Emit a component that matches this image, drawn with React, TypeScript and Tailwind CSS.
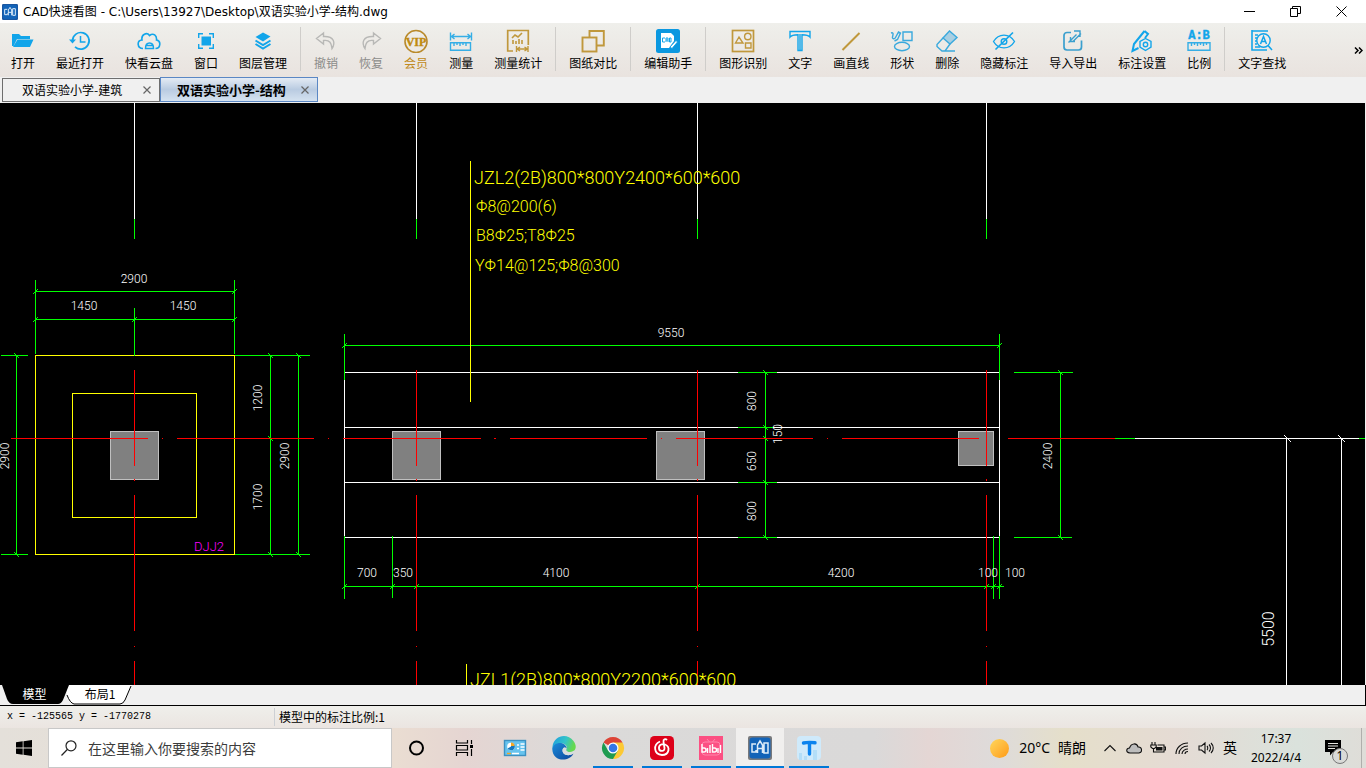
import type { ReactNode } from "react";

type IconProps = { children: ReactNode; color?: string; size?: string };

const BLUE = "#12a5ea";
const GOLD = "#c0983c";

const Icon = ({ children, color = BLUE, size = "w-6 h-6" }: IconProps) => (
  <svg viewBox="0 0 24 24" className={`${size} shrink-0`} fill="none" stroke={color} strokeWidth="1.4" aria-hidden="true">
    {children}
  </svg>
);

const CadLogo = ({ size, frame = false }: { size: string; frame?: boolean }) => (
  <svg viewBox="0 0 24 24" className={`${size} shrink-0`} aria-hidden="true">
    <rect width="24" height="24" rx="2" fill={frame ? "#77797c" : "#1a56a0"} />
    <rect x="1.5" y="1.5" width="21" height="21" rx="3" fill="#1263b8" />
    <g fill="none" stroke="#dcebf8" strokeWidth="1.5">
      <path d="M8 8H4v8h4V14M16 7v10h4V7zM9.500 17V9l2.500-4 2.500 4v8M9.500 12.500h5" />
    </g>
  </svg>
);

type Tool = { label: string; icon: ReactNode; tone?: "gray" | "gold"; sepAfter?: boolean };

const tools: Tool[] = [
  {
    label: "打开",
    icon: (
      <Icon>
        <path d="M1 17V5h7l2 2h9v3H6L2.500 17z M6.500 10.500h16L19 18H2z" fill={BLUE} stroke="none" />
      </Icon>
    ),
  },
  {
    label: "最近打开",
    icon: (
      <Icon>
        <path d="M4.500 11.500a8.300 8.300 0 1 1 2.500 6.300" strokeWidth="1.700" />
        <path d="M1 10.500h7l-3.500 4z" fill={BLUE} stroke="none" />
        <path d="M12.500 7v6h5" strokeWidth="1.500" />
      </Icon>
    ),
  },
  {
    label: "快看云盘",
    icon: (
      <Icon>
        <path d="M6 19.500c-6 0-6.500-8-1-8.500C4 5 10 3 12.500 6.500c4-3 7.500 0 7 4.500 5 1 4 8.500-1 8.500" strokeWidth="1.600" />
        <path d="M8.500 19.500c0-7.500 8-7.500 8 0zM8.500 16.500h8" strokeWidth="1.500" />
      </Icon>
    ),
  },
  {
    label: "窗口",
    icon: (
      <Icon>
        <rect x="7.500" y="7.500" width="9.500" height="9" fill={BLUE} stroke="none" />
        <path d="M9 4.700H4.700V9M15 4.700h4.300V9M9 19.300H4.700V15M15 19.300h4.300V15" />
      </Icon>
    ),
  },
  {
    label: "图层管理",
    sepAfter: true,
    icon: (
      <Icon>
        <path d="M12 3.500 19.500 7.500 12 12.500 4.500 8z" fill={BLUE} stroke="none" />
        <path d="M4.500 11.500 12 16l7.500-4.500M4.500 15 12 19.500l7.500-4.500" strokeWidth="2" />
      </Icon>
    ),
  },
  {
    label: "撤销",
    tone: "gray",
    icon: (
      <Icon color="#b8b8b6">
        <path d="M9.500 4 2.500 9.500l7 5.500v-3.500c6.500-1 8 3 8.500 8 3.500-5.500 2.500-12.500-8.500-12z" />
      </Icon>
    ),
  },
  {
    label: "恢复",
    tone: "gray",
    icon: (
      <Icon color="#b8b8b6">
        <path d="m14.500 4 7 5.500-7 5.500v-3.500c-6.500-1-8 3-8.500 8-3.500-5.500-2.500-12.500 8.500-12z" />
      </Icon>
    ),
  },
  {
    label: "会员",
    tone: "gold",
    icon: (
      <Icon color="#b98a2c">
        <circle cx="12" cy="12.500" r="11" strokeWidth="1.600" />
        <text x="12" y="17" textAnchor="middle" fontSize="12" fontWeight="700" fill="#c08a10" stroke="#c08a10" strokeWidth=".4" fontFamily="Liberation Serif, serif">
          VIP
        </text>
      </Icon>
    ),
  },
  {
    label: "测量",
    icon: (
      <Icon color="#35aee6">
        <path d="M1.500 3.500v8M22.500 3.500v8M2 7.500h20M5.500 5 2.500 7.500l3 2.500M18.500 5l3 2.500-3 2.500M1.500 13.700h20v7.600h-20zM5 14v3M8 14v2M11 14v3M14 14v2M17 14v3" />
      </Icon>
    ),
  },
  {
    label: "测量统计",
    sepAfter: true,
    icon: (
      <Icon color={GOLD}>
        <path d="M7 22H1.700V1.500h20.600V16" strokeWidth="1.700" />
        <path d="m6 9 3-3 3 2 4-4M7 15v-4M10 15v-3M13 15v-5M16 15v-4" strokeWidth="1.600" />
        <path d="M10.500 17v6M22 17v6M11 20h11M14 18l-3 2 3 2M18.500 18l3 2-3 2" />
      </Icon>
    ),
  },
  {
    label: "图纸对比",
    sepAfter: true,
    icon: (
      <Icon color={GOLD}>
        <path d="M8.500 8.500V2h14.300v14.500h-7" strokeWidth="1.900" />
        <rect x="1.500" y="8.500" width="14" height="14" strokeWidth="1.900" />
      </Icon>
    ),
  },
  {
    label: "编辑助手",
    sepAfter: true,
    icon: (
      <Icon>
        <rect width="24" height="24" rx="2.500" fill="#0b98e0" stroke="none" />
        <path d="M5 4h10l3 3v5l-5 7H5z" fill="#fff" stroke="none" />
        <path d="M9 9H6.500v4H9M10 13V9h2v4M10 11h2M13.500 9v4h1.500V9z" strokeWidth="1" />
        <path d="m14 18 6-6.500 1.500 1.500-5.500 6.500z" fill="#fff" stroke="#0b98e0" strokeWidth=".8" />
      </Icon>
    ),
  },
  {
    label: "图形识别",
    icon: (
      <Icon color={GOLD}>
        <rect x="1.500" y="1.500" width="21" height="21" strokeWidth="1.700" />
        <path d="M8 8 4.500 14h7.500zM14.500 14h5.500v5h-5.500z" />
        <circle cx="16.800" cy="7.500" r="3.200" />
      </Icon>
    ),
  },
  {
    label: "文字",
    icon: (
      <Icon>
        <path d="M2 2.500h20v5.500c-1.500-2-4-2.300-8-2.300v15.800h-4V5.700C6 5.700 3.500 6 2 8z" />
        <path d="M12 5v16" />
      </Icon>
    ),
  },
  {
    label: "画直线",
    icon: (
      <Icon color={GOLD}>
        <path d="M3.500 21 20.500 4" strokeWidth="1.900" />
      </Icon>
    ),
  },
  {
    label: "形状",
    icon: (
      <Icon color="#3aa9dd">
        <path d="M13 3h9v8.500h-9z" />
        <ellipse cx="12" cy="17.500" rx="7.500" ry="4.200" />
        <path d="M1 4c3-1 2 2 1.500 4s2 2.500 3 .5L8.500 3l2 1-3 6.500-3 1.500" />
      </Icon>
    ),
  },
  {
    label: "删除",
    icon: (
      <Icon color="#3aa9dd">
        <path d="M14.500 2 8 9l7 6 7-6.500z" fill="#a9cfe2" />
        <path d="m8 9-6 6.500v2l5 4.500h3l5-7M8 22h12" />
      </Icon>
    ),
  },
  {
    label: "隐藏标注",
    icon: (
      <Icon>
        <path d="M1.500 12.500c5-8.500 16-8.500 21 0-5 8.500-16 8.500-21 0z" />
        <circle cx="12" cy="12.500" r="2.800" />
        <path d="M21 3.500 3.500 20.500" strokeWidth="1.700" />
      </Icon>
    ),
  },
  {
    label: "导入导出",
    icon: (
      <Icon color="#3a9fce">
        <path d="M10 3.500H6a3 3 0 0 0-3 3V18a3 3 0 0 0 3 3h11.500a3 3 0 0 0 3-3v-6.500" strokeWidth="1.700" />
        <path d="m7.500 13.500 8-8M13 2h6v6M20 4.500l-8 8M14 12.500h-4.500V8" />
      </Icon>
    ),
  },
  {
    label: "标注设置",
    icon: (
      <Icon>
        <path d="M14.500 2 4 15 2.500 22l6-3M14.500 2l3.500 3-3 4" strokeWidth="2" />
        <path d="m15.500 9.500 5.500 3V18l-5.500 3.500L10 18v-5.500z" />
        <circle cx="15.500" cy="15.500" r="2.200" />
      </Icon>
    ),
  },
  {
    label: "比例",
    sepAfter: true,
    icon: (
      <Icon color="#35aee6">
        <text x="12" y="10" textAnchor="middle" fontSize="12" fontWeight="700" fill={BLUE} stroke={BLUE} strokeWidth=".4" fontFamily="Liberation Mono, monospace">
          A:B
        </text>
        <path d="M1 13.700h22v7.600H1zM4.500 14v3M7.500 14v2M10.500 14v3M13.500 14v2M16.500 14v3M19.500 14v2" />
      </Icon>
    ),
  },
  {
    label: "文字查找",
    icon: (
      <Icon>
        <path d="M2 1v20h15M2 2h16M5 6h3M5 9h2M5 12h2M5 15h2M5 18h5" strokeWidth="1.600" />
        <circle cx="13.500" cy="11.500" r="6.700" fill="#efeeeb" />
        <path d="M10.500 15 13.500 7.500 16.500 15M11.500 12.500h4M18 16.500l4 4.500" strokeWidth="1.500" />
      </Icon>
    ),
  },
];

const TitleBar = () => (
  <header className="flex h-[23px] items-center bg-white pl-0.5 text-black">
    <CadLogo size="w-4 h-4" />
    <h1 className="ml-[5px] flex-1 whitespace-nowrap font-['DejaVu_Sans','Noto_Sans_CJK_SC',sans-serif] text-xs leading-4">CAD快速看图 - C:\Users\13927\Desktop\双语实验小学-结构.dwg</h1>
    <div className="flex h-full pr-0.5">
      <button aria-label="最小化" className="flex w-[46px] items-center justify-center">
        <svg viewBox="0 0 11 11" className="h-[11px] w-[11px]" stroke="#000" fill="none">
          <path d="M0 5.500h11" />
        </svg>
      </button>
      <button aria-label="还原" className="flex w-[46px] items-center justify-center">
        <svg viewBox="0 0 11 11" className="h-[11px] w-[11px]" stroke="#000" fill="none">
          <path d="M.5 2.500h7v8h-7zM2.500 2.500v-2h8v7h-3" />
        </svg>
      </button>
      <button aria-label="关闭" className="flex w-[46px] items-center justify-center">
        <svg viewBox="0 0 11 11" className="h-[11px] w-[11px]" stroke="#000" fill="none">
          <path d="m.5.500 10 10M10.500.500l-10 10" />
        </svg>
      </button>
    </div>
  </header>
);

const Toolbar = () => (
  <nav className="flex h-[54px] items-start bg-linear-to-b from-[#efefeb] to-[#e9e3df]">
    <div className="flex min-w-0 flex-1 gap-[21px] overflow-hidden pl-[11px] pt-1.5 text-xs">
      {tools.map((tool) => (
        <div key={tool.label} className="flex shrink-0 gap-[21px]">
          <button
            className={`flex flex-col items-center whitespace-nowrap ${tool.tone === "gray" ? "text-[#8c8c8a]" : tool.tone === "gold" ? "text-[#c08a20]" : "text-black"}`}
          >
            {tool.icon}
            <span className="mt-0.5 leading-4">{tool.label}</span>
          </button>
          {tool.sepAfter && <span className="-mx-2 -mt-0.5 h-11 w-px bg-[#cfcdca]" />}
        </div>
      ))}
    </div>
    <button aria-label="更多" className="flex h-[54px] w-3 items-center">
      <svg viewBox="0 0 9 7" className="h-[7px] w-[9px]" stroke="#000" strokeWidth="1.500" fill="none">
        <path d="m1 .5 3 3-3 3M5 .5l3 3-3 3" />
      </svg>
    </button>
  </nav>
);

const CloseMark = () => (
  <svg viewBox="0 0 8 8" className="h-2 w-2" stroke="#666" strokeWidth="1.200" aria-hidden="true">
    <path d="m.5.500 7 7M7.500.500l-7 7" />
  </svg>
);

const FileTabs = () => (
  <div className="flex h-[26px] items-end bg-[#f0f0f0] pb-px pl-0.5 text-black">
    <div className="flex h-6 w-[158px] items-center border border-[#6e6e6e] pl-[19px]">
      <button className="flex-1 whitespace-nowrap text-left text-xs">双语实验小学-建筑</button>
      <button aria-label="关闭 双语实验小学-建筑" className="mr-2">
        <CloseMark />
      </button>
    </div>
    <div className="flex h-[25px] w-[158px] items-center border border-[#5a87c4] bg-linear-to-b from-[#e4ebf4] via-[#b9cbe1] to-[#d5e2f0] pl-4">
      <button className="flex-1 whitespace-nowrap text-left text-[13px] font-bold">双语实验小学-结构</button>
      <button aria-label="关闭 双语实验小学-结构" className="mr-2">
        <CloseMark />
      </button>
    </div>
  </div>
);

const GREEN = "#00ff00";
const RED = "#ff0000";
const YELLOW = "#ffff00";

// dimension line with a slash where each extension line meets it
const HDim = ({ y, from, to, ticks }: { y: number; from: number; to: number; ticks: number[] }) => (
  <path stroke={GREEN} d={`M${from} ${y}H${to}` + ticks.map((x) => `M${x - 2} ${y + 2}L${x + 2} ${y - 2}`).join("")} />
);

const VDim = ({ x, from, to, ticks }: { x: number; from: number; to: number; ticks: number[] }) => (
  <path stroke={GREEN} d={`M${x} ${from}V${to}` + ticks.map((y) => `M${x - 2} ${y - 2}L${x + 2} ${y + 2}`).join("")} />
);

const dimLabels = [
  { text: "2900", x: 134, y: 279 },
  { text: "1450", x: 84, y: 306 },
  { text: "1450", x: 183, y: 306 },
  { text: "9550", x: 671, y: 333 },
  { text: "700", x: 367, y: 573 },
  { text: "350", x: 403, y: 573 },
  { text: "4100", x: 556, y: 573 },
  { text: "4200", x: 841, y: 573 },
  { text: "100", x: 988, y: 573 },
  { text: "100", x: 1015, y: 573 },
  { text: "2900", x: 5, y: 456, up: true },
  { text: "1200", x: 258, y: 398, up: true },
  { text: "1700", x: 258, y: 497, up: true },
  { text: "2900", x: 285, y: 456, up: true },
  { text: "800", x: 752, y: 401, up: true },
  { text: "150", x: 778, y: 434, up: true },
  { text: "650", x: 752, y: 461, up: true },
  { text: "800", x: 752, y: 511, up: true },
  { text: "2400", x: 1048, y: 456, up: true },
];

const axes = [134, 416, 697, 986];

const Drawing = () => (
  <main className="min-h-0 flex-1 overflow-hidden border-r border-[#f0f0f0] bg-black">
    <svg className="block h-full w-full font-['Roboto','Liberation_Sans',sans-serif] font-light" fill="none" role="img" aria-label="双语实验小学-结构">
      <g transform="translate(.5 -102.500)" shapeRendering="crispEdges" strokeLinecap="square">
        {/* footing DJJ2 */}
        <path stroke={YELLOW} d="M35 355H234V554H35zM72 393H196V517H72z" />
        <path stroke={GREEN} d="M35 280V353M234 280V353M134 308V355M1 355H27M1 554H27M235 355H309M235 554H309" />
        <HDim y={291} from={35} to={234} ticks={[35, 234]} />
        <HDim y={319} from={35} to={234} ticks={[35, 134, 234]} />
        <VDim x={16} from={355} to={554} ticks={[355, 554]} />
        <VDim x={270} from={355} to={554} ticks={[355, 438, 554]} />
        <VDim x={298} from={355} to={554} ticks={[355, 554]} />

        {/* foundation beam */}
        <path stroke="#fff" d="M344 372V537M999 372V537M344 372H999M344 427H999M344 482H999M344 537H999" />
        <path stroke={GREEN} d="M344 334V379M999 334V379M344 536V598M999 536V598M392 536V597M993 536V598" />
        <path stroke={GREEN} d="M738 372H776M738 427H772M738 482H776M738 537H776M1014 372H1072M1014 537H1071" />
        <HDim y={345} from={344} to={999} ticks={[344, 999]} />
        <HDim y={586} from={344} to={1003} ticks={[344, 392, 416, 697, 986, 993, 999]} />
        <VDim x={765} from={372} to={537} ticks={[372, 427, 438, 482, 537]} />
        <VDim x={1060} from={372} to={537} ticks={[372, 537]} />

        {/* columns */}
        <g fill="#808080" stroke="#c0c0c0">
          <path d="M110 431h48v48h-48zM392 431h48v48h-48zM656 431h48v48h-48zM958 431h35v34h-35z" />
        </g>

        {/* grid axes */}
        {axes.map((x) => (
          <g key={x}>
            <path stroke="#fff" d={`M${x} 103V218`} />
            <path stroke={GREEN} d={`M${x} 219V238`} />
            <path stroke={RED} d={`M${x} 370V465M${x} 479V480M${x} 495V630M${x} 646V646M${x} 661V700`} />
          </g>
        ))}
        <path stroke={RED} d="M11 438H147M162 438h0M177 438H313M328 438h0M343 438H480M494 438h1M510 438H646M661 438h0M676 438H812M827 438h0M842 438H978M1008 438H1114" />
        <path stroke={GREEN} d="M1115 438H1134M1359 438H1364" />
        <path stroke="#fff" d="M1135 438H1358M1286 438V700M1341 438V700M1284 435l6 6M1338 435l6 6" />

        {/* leaders */}
        <path stroke={YELLOW} d="M470 161V401M466 664V700" />
      </g>

      <g transform="translate(0 -103)" fill="#fff" fontSize="12">
        {dimLabels.map((label) => (
          <text
            key={`${label.text}-${label.x}-${label.y}`}
            textAnchor="middle"
            dominantBaseline="central"
            transform={`translate(${label.x} ${label.y})${label.up ? " rotate(-90)" : ""}`}
          >
            {label.text}
          </text>
        ))}
        <text textAnchor="middle" dominantBaseline="central" fontSize="16" transform="translate(1268 629) rotate(-90)">
          5500
        </text>
        <text x="194" y="551" fill="#ff00ff" fontSize="13">
          DJJ2
        </text>
        <g fill={YELLOW} fontSize="16">
          <text x="474" y="184" fontSize="18">
            JZL2(2B)800*800Y2400*600*600
          </text>
          <text x="476" y="212">Φ8@200(6)</text>
          <text x="476" y="241">B8Φ25;T8Φ25</text>
          <text x="475" y="271">YΦ14@125;Φ8@300</text>
          <text x="470" y="686" fontSize="18">
            JZL1(2B)800*800Y2200*600*600
          </text>
        </g>
      </g>
    </svg>
  </main>
);

const LayoutTabs = () => (
  <div className="relative flex h-[21px] border-b border-r border-black bg-[#f0f0f0] text-xs">
    <svg className="absolute left-0 top-0 h-5 w-[134px]" viewBox="0 0 134 20" aria-hidden="true">
      <path d="M66 0h66l-7 15q-2 4-5 4H74q-4-1-7-9z" fill="#fff" />
      <path d="M131 1l-6 14q-2 4-5 4H74q-4-1-7-9" fill="none" stroke="#000" />
      <path d="M2 0h67l-6 15q-2 4-5 4H13q-4 0-6-5z" fill="#000" />
    </svg>
    <button className="relative w-[69px] pb-0.5 text-white">模型</button>
    <button className="relative w-[62px] pb-0.5 text-black">布局1</button>
  </div>
);

const StatusBar = () => (
  <footer className="flex h-[22px] items-center bg-linear-to-b from-[#efefeb] to-[#ebe5e1] text-xs text-black">
    <output className="w-[274px] whitespace-pre pl-[7px] font-['Liberation_Mono',monospace] text-[10px]">x = -125565 y = -1770278</output>
    <span className="h-[18px] w-px bg-[#cdd0d4]" />
    <span className="ml-1">模型中的标注比例:1</span>
  </footer>
);

const apps: { name: string; icon: ReactNode; state?: "open" | "active" }[] = [
  {
    name: "Cortana",
    icon: (
      <Icon color="#000">
        <circle cx="11.500" cy="12" r="6.500" strokeWidth="2" />
      </Icon>
    ),
  },
  {
    name: "任务视图",
    icon: (
      <Icon color="#000">
        <path d="M2.500 4v3h11V4M2.500 20v-3.500h11V20M2.500 9.500h11v4.500h-11zM17.500 4v4M17.500 13v7" strokeWidth="1.200" />
        <path d="M16 9h3v3h-3z" fill="#000" stroke="none" />
      </Icon>
    ),
  },
  {
    name: "控制面板",
    icon: (
      <Icon color="#fff">
        <rect x="1.500" y="4.500" width="21" height="15" fill="#67c3ee" stroke="#3c91c2" />
        <circle cx="8" cy="10.500" r="3.800" fill="#fff" stroke="none" />
        <path d="M8 10.500V6.700a3.800 3.800 0 1 1-3.300 5.700z" fill="#1678bd" stroke="none" />
        <path d="M8 10V6.500A3.500 3.500 0 0 1 11.500 10z" fill="#f5a623" stroke="none" />
        <path d="M14 9h2M14 12.500h2M17.500 8h4M17.500 11h4M17.500 14h4M9 17.500h7" />
        <path d="M4 17.500h4" stroke="#f5a623" />
      </Icon>
    ),
  },
  {
    name: "Microsoft Edge",
    icon: (
      <svg viewBox="0 0 24 24" className="h-6 w-6" aria-hidden="true">
        <defs>
          <linearGradient id="edgeTop" x1="0" y1="0" x2="1" y2="0.300">
            <stop offset="0" stopColor="#1d9ce0" />
            <stop offset=".6" stopColor="#33c4c8" />
            <stop offset="1" stopColor="#66d94f" />
          </linearGradient>
          <linearGradient id="edgeLow" x1="0" y1="0" x2="1" y2="1">
            <stop offset="0" stopColor="#1b8cda" />
            <stop offset="1" stopColor="#0c469b" />
          </linearGradient>
        </defs>
        <path d="M.5 10.500C2-.5 15-3.500 21.500 5c4 5 2.500 11-3.500 11-3 0-4.500-1.500-3.500-3C16 9 11 6.500 7.500 7.500 4 8.300 1.500 10 .5 14z" fill="url(#edgeTop)" />
        <path d="M.3 13C1 8.500 5 6.500 9 7c3.500.5 6 3.500 5.500 5.500-1.500-2-4-1-4 2 0 4 5.500 6.500 11 3C17 26.500.5 26 .3 13z" fill="url(#edgeLow)" />
        <path d="M10.500 14.500c0-3 2.500-4 4-2-1.500 2 0 3.500 3.500 3.500 2 0 3.500-1 4-1.500.5 1 0 2-.5 3-5.500 3.500-11 1-11-3z" fill="#d9dddd" />
      </svg>
    ),
  },
  {
    name: "Google Chrome",
    state: "open",
    icon: (
      <svg viewBox="0 0 24 24" className="h-6 w-6" aria-hidden="true">
        <path d="M12 12 2.470 6.500A11 11 0 0 1 21.530 6.500z" fill="#dd4437" />
        <path d="M12 12V6.500h9.530A11 11 0 0 1 12 23z" fill="#fcc934" />
        <path d="M12 23A11 11 0 0 1 2.470 6.500L7.240 14.750 12 12l4.760 2.750z" fill="#1e9b50" />
        <circle cx="12" cy="12" r="5.500" fill="#fff" />
        <circle cx="12" cy="12" r="4.300" fill="#3577e5" />
      </svg>
    ),
  },
  {
    name: "网易云音乐",
    state: "open",
    icon: (
      <Icon color="#fff">
        <rect width="24" height="24" rx="4.500" fill="#dd0019" stroke="none" />
        <path d="M10 5.500c-7 3-6.500 13 2 13.500 7.500 0 8.500-8.500 3-10.500-3-1-6.500.5-6 4 .5 3.500 6 3 5.500-.5L13.500 6c-.5-3 2-3.500 3.500-2" strokeWidth="1.800" />
      </Icon>
    ),
  },
  {
    name: "哔哩哔哩",
    state: "open",
    icon: (
      <Icon color="#ff86ab">
        <rect width="24" height="24" fill="#fc5083" stroke="none" />
        <rect x="3" y="6" width="18" height="13" rx="3" strokeWidth="1" />
        <path d="m8 3 2.500 3M16 3l-2.500 3" strokeWidth="1" />
        <path d="M3 8v8h2a2 2 0 0 0 0-4H3M8.500 12v5M11 9v8M13.500 8v8h2a2 2 0 0 0 0-4h-2M19 12v5M21.500 9v8" stroke="#fff" strokeWidth="1.400" />
      </Icon>
    ),
  },
  { name: "CAD快速看图", state: "active", icon: <CadLogo size="w-6 h-6" frame /> },
  {
    name: "腾讯",
    state: "open",
    icon: (
      <Icon>
        <rect width="24" height="24" rx="4" fill="#cfeafb" stroke="none" />
        <path d="M2 24v-7h3v7M7 24v-4h3v4M16 24V14h4v10" fill="#b3def8" stroke="none" />
        <path d="M6.500 7c3-.8 7-.8 11.500-.3M12.500 8v10" stroke="#0b83ee" strokeWidth="3.400" strokeLinecap="round" />
      </Icon>
    ),
  },
];

const trayIcons: { name: string; icon: ReactNode }[] = [
  { name: "显示隐藏的图标", icon: <path d="m2.500 11 5.500-5.500 5.500 5.500" /> },
  { name: "OneDrive", icon: <path d="M4 13C-1 12.500.5 8 3.500 8 5 3 11 2.500 12 7c4-.5 5 5 1 6z" fill="#bdbdbd" /> },
  {
    name: "电池",
    icon: (
      <>
        <path d="M2 2v3M5 2v3M.8 5h5.400v2L4.500 8.500h-2L.8 7zM3.500 8.500V12H14V5H7.500M14.500 7h1v3h-1" />
        <path d="M6 7h6.500v3.500H6z" fill="#111" stroke="none" />
      </>
    ),
  },
  { name: "网络", icon: <path d="M2 14C2 8 7 3 14 3M5 14c0-5 4-8 9-8M8 14c0-3 3-5 6-5M11 14c0-1.500 1.500-2.500 3-2.500" /> },
  { name: "音量", icon: <path d="M1 6h2.500L7 3v10l-3.500-3H1zM9 6c1 1 1 3 0 4M11 4.500c2 2 2 5 0 7M13 3c3 3 3 7 0 10" /> },
];

const Taskbar = () => (
  <footer className="flex h-10 bg-[linear-gradient(90deg,#e4e0da_0%,#eaddd2_29%,#e5d5d2_34%,#dbdad9_42%,#dad9d9_64%,#e4d6d4_68%,#dedbda_73%,#e5dfca_78%,#e5dbd4_86%,#dae2dc_95%,#dfddd8_100%)] text-black">
    <button aria-label="开始" className="flex w-12 items-center justify-center">
      <svg viewBox="0 0 16 16" className="h-4 w-4" aria-hidden="true">
        <path d="M0 2.200 6.700 1.300V7.600H0zM7.500 1.200 16 0V7.600H7.500zM0 8.400H6.700V14.700L0 13.800zM7.500 8.400H16V16L7.500 14.800z" />
      </svg>
    </button>
    <label className="flex w-[344px] items-center border border-[#c8c8c8] bg-white pl-3">
      <svg viewBox="0 0 16 16" className="h-4 w-4 shrink-0" fill="none" stroke="#222" strokeWidth="1.200" aria-hidden="true">
        <circle cx="10" cy="5.800" r="5" />
        <path d="M6.300 9.500.5 15.500" />
      </svg>
      <input
        type="text"
        aria-label="搜索"
        placeholder="在这里输入你要搜索的内容"
        className="ml-[11px] min-w-0 flex-1 bg-transparent text-sm outline-none placeholder:text-[#3c3c3c]"
      />
    </label>

    <div className="flex gap-px pl-px">
      {apps.map((app) => (
        <button
          key={app.name}
          aria-label={app.name}
          className={`relative flex w-12 items-center justify-center ${app.state === "active" ? "bg-[#f0efee]" : ""}`}
        >
          {app.icon}
          {app.state && <span className={`absolute bottom-0 h-0.5 bg-[#0078d7] ${app.state === "active" ? "inset-x-0" : "inset-x-1"}`} />}
        </button>
      ))}
    </div>

    <div className="ml-auto flex font-['Noto_Sans','Noto_Sans_CJK_SC',sans-serif]">
      <button className="mr-3 flex items-center whitespace-nowrap text-sm">
        <span className="mr-2.5 h-[19px] w-[19px] rounded-full bg-linear-to-br from-[#ffd75a] to-[#ff9a0a]" />
        <span className="mr-2">20°C</span>
        <span>晴朗</span>
      </button>
      {trayIcons.map((item) => (
        <button key={item.name} aria-label={item.name} className="flex w-6 items-center justify-center">
          <svg viewBox="0 0 16 16" className="h-4 w-4" fill="none" stroke="#111" strokeWidth="1.100">
            {item.icon}
          </svg>
        </button>
      ))}
      <button className="w-6 text-sm">英</button>
      <button className="flex w-[68px] flex-col items-center justify-center text-xs leading-[19px]">
        <span>17:37</span>
        <span>2022/4/4</span>
      </button>
      <button aria-label="通知" className="relative flex w-[50px] items-center justify-center pr-1">
        <svg viewBox="0 0 16 16" className="h-4 w-4" aria-hidden="true">
          <path d="M0 0h16v12H8l-3 3.500V12H0z" />
          <path d="M3 3.500h10M3 6h10M3 8.500h7" stroke="#e4e4e0" />
        </svg>
        <span className="absolute bottom-1 right-3 flex h-4 w-4 items-center justify-center rounded-full border border-[#777] bg-[#d9dad7] text-xs leading-none">1</span>
      </button>
      <span className="ml-px w-[5px] border-l border-[#b0afac]" />
    </div>
  </footer>
);

const App = () => {
  return (
    <div className="flex h-screen flex-col overflow-hidden bg-[#f0f0f0] font-['Noto_Sans_CJK_SC',sans-serif]">
      <TitleBar />
      <Toolbar />
      <FileTabs />
      <Drawing />
      <LayoutTabs />
      <StatusBar />
      <Taskbar />
    </div>
  );
};

export default App;
